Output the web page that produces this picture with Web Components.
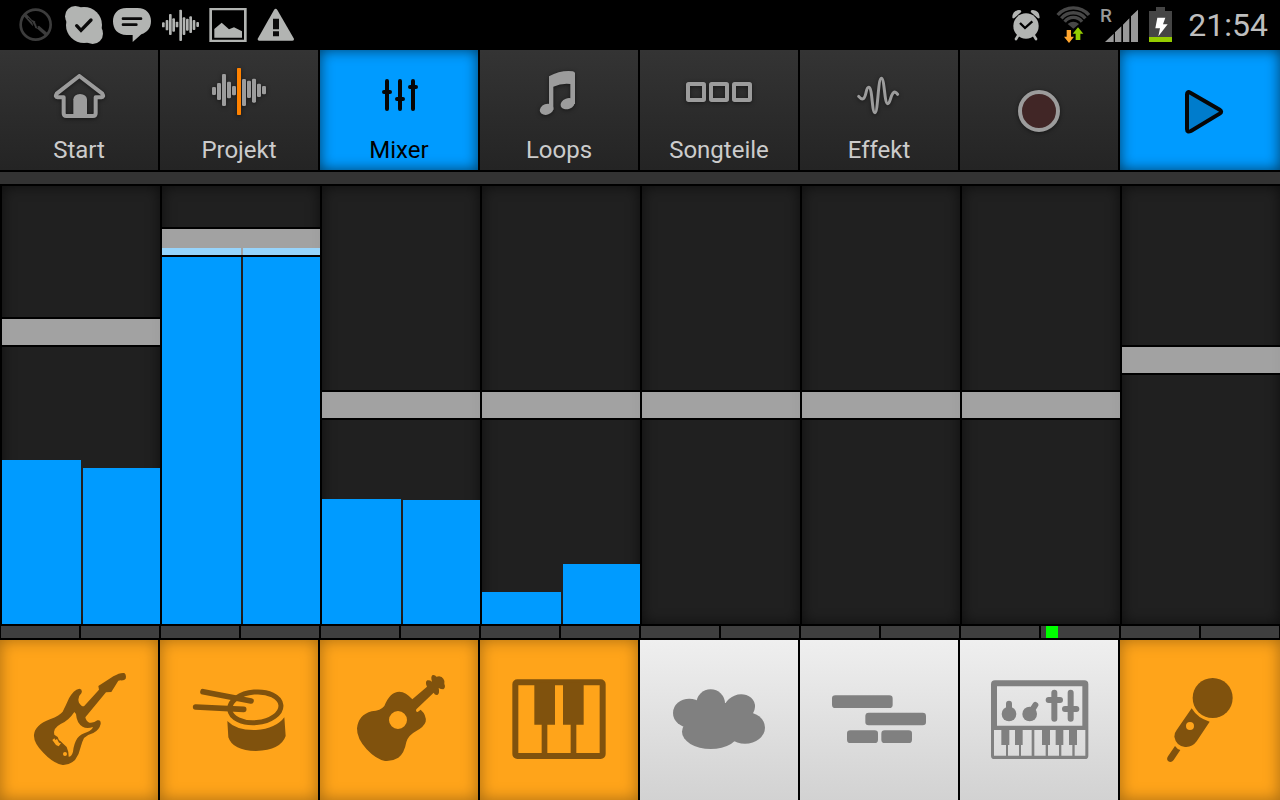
<!DOCTYPE html>
<html lang="de">
<head>
<meta charset="utf-8">
<title>Mixer</title>
<style>
    body{
        margin: 0;
        height: 100vh;
        display: flex;
        flex-direction: column;
        background: #000;
        font-family: Roboto, "Noto Sans", sans-serif;
    }
    .toolbar, .pads{
        display: grid;
        grid-template-columns: repeat(8, 1fr);
    }
    .mixer{
        flex: 1;
        min-height: 0;
        display: grid;
        grid-template-columns: repeat(8, 1fr);
    }
    .divider{
        height: 12px;
        margin: 2px 0;
        background: #333;
    }
</style>
</head>
<body>
<status-bar time="21:54"></status-bar>
<nav class="toolbar">
    <tool-button icon="home">Start</tool-button>
    <tool-button icon="project">Projekt</tool-button>
    <tool-button icon="mixer" active>Mixer</tool-button>
    <tool-button icon="loops">Loops</tool-button>
    <tool-button icon="parts">Songteile</tool-button>
    <tool-button icon="effect">Effekt</tool-button>
    <tool-button icon="record" label="Aufnahme"></tool-button>
    <tool-button icon="play" label="Wiedergabe" active></tool-button>
</nav>
<div class="divider"></div>
<main class="mixer">
    <mixer-channel name="E-Gitarre" volume="679" left="164" right="156"></mixer-channel>
    <mixer-channel name="Schlagzeug" volume="900" left="376" right="376"></mixer-channel>
    <mixer-channel name="Gitarre" volume="500" left="125" right="124"></mixer-channel>
    <mixer-channel name="Piano" volume="500" left="32" right="60"></mixer-channel>
    <mixer-channel name="Atmo" volume="500" left="0" right="0"></mixer-channel>
    <mixer-channel name="Sequenz" volume="500" left="0" right="0"></mixer-channel>
    <mixer-channel name="Synthesizer" volume="500" left="0" right="0"></mixer-channel>
    <mixer-channel name="Mikrofon" volume="610" left="0" right="0"></mixer-channel>
</main>
<song-position value="825"></song-position>
<section class="pads">
    <track-pad icon="strat" label="E-Gitarre" active></track-pad>
    <track-pad icon="drum" label="Schlagzeug" active></track-pad>
    <track-pad icon="acoustic" label="Gitarre" active></track-pad>
    <track-pad icon="piano" label="Piano" active></track-pad>
    <track-pad icon="cloud" label="Atmo"></track-pad>
    <track-pad icon="blocks" label="Sequenz"></track-pad>
    <track-pad icon="synth" label="Synthesizer"></track-pad>
    <track-pad icon="mic" label="Mikrofon" active></track-pad>
</section>

<script>
// vertical bars of a waveform: [x, top, bottom]
const bars = (list, w) => list.map(([x, a, b]) =>
    `<rect x="${x - w / 2}" y="${a}" width="${w}" height="${b - a}" rx="${w / 3}"/>`).join("")

// name: [viewBox, markup]; everything is drawn in currentColor unless it says otherwise
const ICONS = {
    mute: ["48 15 120 120", `
        <circle cx="107" cy="74" r="45" fill="none" stroke="currentColor" stroke-width="8"/>
        <path d="M72 49L79 41L96 60L105 64L112 80L117 77L143 100L136 107L112 86L106 84L101 72L98 78Z"/>
        <path d="M84 54L97 66L103 84M106 66L113 84" fill="none" stroke="#000" stroke-width="2"/>`],
    skype: ["192 15 120 120", `
        <circle cx="252" cy="75" r="54"/><circle cx="226" cy="49" r="31"/><circle cx="278" cy="101" r="31"/>
        <path d="M230 77L243 91L273 60" fill="none" stroke="#0a0a0a" stroke-width="10" stroke-linecap="round"/>`],
    chat: ["336 15 120 120", `
        <path d="M380 24H412C440 24 453 43 453 63C453 85 442 96 424 103L398 126V105H380C352 105 339 87 339 64C339 42 352 24 380 24Z"/>
        <path d="M369 56H423M369 74H409" stroke="#0a0a0a" stroke-width="8" stroke-linecap="round"/>`],
    wave: ["480 15 120 120", bars([[490, 67, 82], [501, 60, 91], [511, 42, 105], [521, 55, 95], [531, 65, 82],
        [542, 29, 123], [552, 52, 105], [562, 56, 92], [572, 49, 99], [582, 60, 90], [593, 66, 81]], 8)],
    picture: ["624 15 120 120", `
        <path d="M628 24H740V126H628ZM636 31V119H732V31Z" fill-rule="evenodd"/>
        <path d="M643 113V87L665 68L687 88L702 82L726 94V113Z"/>`],
    warning: ["768 15 120 120", `
        <path d="M822 30Q827 22 832 30L881 115Q884 122 877 122H778Q771 122 774 115Z"/>
        <path d="M819 56H837V88H819ZM819 94H837V109H819Z" fill="#0c0c0c"/>`],
    alarm: ["132 15 120 120", `
        <path d="M176 104L168 117M220 104L228 117" stroke="currentColor" stroke-width="8" stroke-linecap="round"/>
        <path d="M157 52Q157 32 177 30Q186 30 183 37L163 54Q157 57 157 52ZM239 52Q239 32 219 30Q210 30 213 37L233 54Q239 57 239 52Z"/>
        <circle cx="198" cy="78" r="38"/>
        <path d="M180 69L195 84L217 64" fill="none" stroke="#000" stroke-width="7"/>`],
    wifi: ["276 15 120 120", `
        <g fill="none" stroke="#474747" stroke-width="10">
            <path d="M293 45A62 62 0 0 1 387 45"/><path d="M304 55A47 47 0 0 1 376 55"/><path d="M314 65A33 33 0 0 1 366 65"/>
        </g>
        <path d="M323 72Q340 58 357 72L340 86Z" fill="#474747"/>
        <path d="M320 90H333V110H342L327 129L312 110H320Z" fill="#ffa52e"/>
        <path d="M347 120V101H338L354 82L370 101H361V120Z" fill="#94cc00"/>`],
    signal: ["420 0 120 150", `
        <path d="M435 126L461 101V126ZM465 97L484 79V126H465ZM489 74L508 55V126H489ZM513 49L534 29V126H513Z"/>
        <text x="420" y="65" font-size="57" font-weight="500">R</text>`],
    battery: ["564 15 72 120", `
        <path d="M588 21H615V33H636V111H567V33H588Z" fill="#454545"/>
        <path d="M567 111H636V126H567Z" fill="#94cc00"/>
        <path d="M592 53H616L609 73H623L595 109L600 85H586Z" fill="#fff"/>`],

    home: ["117 168 240 240", `
        <path d="M238 228L170 281Q164 291 173 292H191V340Q191 348 199 348H279Q287 348 287 340V292H304Q313 291 307 281Z" fill="none" stroke="currentColor" stroke-width="12" stroke-linejoin="round"/>
        <path d="M220 348V298Q222 283 240 282Q259 283 261 298V348Z"/>`],
    project: ["597 168 240 240", bars([[642, 261, 285], [657, 249, 300], [672, 222, 318], [687, 245, 295], [702, 258, 286],
        [732, 237, 318], [747, 242, 294], [762, 236, 308], [777, 251, 291], [792, 258, 283]], 12) +
        `<rect x="711" y="204" width="12" height="141" rx="2" fill="#ff8200"/>`],
    mixer: ["117 18 240 240", `
        <path d="M201 93V177M240 93V177M279 93V177M192 126H210M231 147H249M270 111H288" stroke="currentColor" stroke-width="12" stroke-linecap="round"/>`],
    loops: ["597 18 240 240", `
        <path d="M687 79Q722 60 758 64Q765 65 765 70V162H751V102Q725 99 700 110V180H687Z"/>
        <ellipse cx="680" cy="178" rx="21" ry="16" transform="rotate(-20 680 178)"/>
        <ellipse cx="743" cy="161" rx="22" ry="16" transform="rotate(-20 743 161)"/>`],
    parts: ["117 18 240 240", `
        <g fill="none" stroke="currentColor" stroke-width="12">
            <rect x="144" y="102" width="48" height="48" rx="2"/><rect x="213" y="102" width="48" height="48" rx="2"/><rect x="282" y="102" width="48" height="48" rx="2"/>
        </g>`],
    effect: ["597 18 240 240", `
        <path d="M656 139Q664 149 670 146C680 140 677 112 686 112C698 112 695 188 705 188C714 188 714 85 724 85C734 85 733 161 743 161C752 161 752 127 764 126Q769 127 773 133" fill="none" stroke="currentColor" stroke-width="9" stroke-linecap="round"/>`],
    record: ["117 210 240 240", `<circle cx="237" cy="333" r="57" fill="#412626" stroke="currentColor" stroke-width="12"/>`],
    play: ["600 210 240 240", `
        <path d="M681 283Q681 273 691 278L779 329Q788 335 779 341L693 393Q681 398 681 388Z" fill="#007ccc" stroke="currentColor" stroke-width="12"/>`],

    strat: ["57 150 360 360", `
        <path d="M373 189Q380 195 377 206Q373 212 362 211L355 212L334 246L318 247L256 322Q258 334 268 338Q282 340 292 331Q303 328 302 342Q298 360 280 369Q262 374 252 384Q247 394 243 408Q238 432 225 450Q208 466 188 465Q160 460 130 428Q100 398 102 374Q105 345 150 328Q180 316 188 305Q197 288 207 265Q220 240 238 236Q249 238 244 250Q231 262 237 278Q244 290 252 289L297 239L295 228L340 199Q360 187 373 189Z"/>
        <path d="M223 306Q206 332 182 342Q158 355 163 374L173 381L177 391L181 393L200 411Q206 424 206 440Q215 440 219 425Q222 400 232 385Q242 372 262 366Q276 360 279 351Q260 357 248 350Q230 340 228 312ZM157 390L163 385L166 390L171 387L177 398L183 400L176 409L168 405Z" fill="#ffa41a"/>
        <circle cx="195" cy="432" r="6" fill="#ffa41a"/>`],
    drum: ["537 150 360 360", `
        <ellipse cx="766" cy="292" rx="77" ry="46" transform="rotate(-5 766 292)" fill="none" stroke="currentColor" stroke-width="15"/>
        <path d="M609 245L753 273M587 291L731 298" stroke="currentColor" stroke-width="17" stroke-linecap="round"/>
        <path d="M682 333Q710 362 768 360Q828 356 853 322L857 378Q843 420 768 423Q698 422 685 382Z"/>`],
    acoustic: ["57 150 360 360", `
        <path d="M238 245Q258 246 277 268L321 230Q314 216 322 211Q330 210 336 215Q331 200 338 195Q346 194 349 200Q364 195 370 206Q376 214 373 222Q378 232 370 238Q362 238 356 234Q360 250 352 255Q344 256 341 248L289 298Q286 306 293 306L302 299Q320 315 317 335Q312 350 290 362Q264 376 259 396Q253 430 235 443Q215 455 195 453Q168 448 140 418Q110 385 111 355Q115 315 155 304Q182 302 193 288Q210 245 238 245ZM234 303A27 27 0 1 0 234 357A27 27 0 1 0 234 303Z" fill-rule="evenodd"/>`],
    piano: ["537 150 360 360", `
        <rect x="586" y="217" width="262" height="221" rx="6" fill="none" stroke="currentColor" stroke-width="18"/>
        <path d="M643 217H705V344H682V438H665V344H643ZM729 217H791V344H769V438H752V344H729Z"/>`],
    cloud: ["57 150 360 360", `
        <ellipse cx="148" cy="309" rx="49" ry="43"/><ellipse cx="212" cy="281" rx="43" ry="43"/>
        <ellipse cx="298" cy="294" rx="48" ry="40" transform="rotate(-22 298 294)"/>
        <ellipse cx="315" cy="353" rx="60" ry="48"/><ellipse cx="212" cy="365" rx="86" ry="52"/>
        <ellipse cx="235" cy="325" rx="75" ry="48"/>`],
    blocks: ["537 150 360 360", `
        <rect x="576" y="256" width="182" height="38" rx="10"/><rect x="676" y="308" width="182" height="38" rx="10"/>
        <rect x="621" y="361" width="93" height="38" rx="10"/><rect x="724" y="361" width="92" height="38" rx="10"/>`],
    synth: ["57 150 360 360", `
        <path d="M105 211H373Q385 211 385 223V437Q385 447 375 447H103Q93 447 93 437V223Q93 211 105 211ZM111 229V347H367V229ZM102 360V437H138V360ZM144 360V437H177V360ZM183 360V437H215V360ZM223 360V437H257V360ZM264 360V437H297V360ZM304 360V437H337V360ZM344 360V437H376V360Z" fill-rule="evenodd"/>
        <path d="M124 350H148V405H124ZM165 350H188V405H165ZM246 350H270V405H246ZM287 350H310V405H287ZM327 350H351V405H327Z"/>
        <circle cx="147" cy="312" r="22"/><circle cx="209" cy="312" r="22"/>
        <path d="M147 281V300M226 285L212 307M283 248V326M266 270H300M332 248V326M315 297H349" stroke="currentColor" stroke-width="18" stroke-linecap="round"/>`],
    mic: ["540 150 360 360", `
        <circle cx="758" cy="264" r="60"/>
        <path d="M695 295Q713 325 749 335L710 394Q696 413 675 411Q648 407 643 380Q642 370 650 360ZM690 336A12 12 0 1 0 690 360A12 12 0 1 0 690 336Z" fill-rule="evenodd"/>
        <path d="M645 408Q651 417 661 420L641 450Q634 459 625 454Q618 448 624 439Z"/>`]
}

class UiIcon extends HTMLElement{
    constructor(){
        super()
        this.attachShadow({mode:"open"})
    }
    connectedCallback(){
        const [box, shape] = ICONS[this.getAttribute("name")]
        this.shadowRoot.innerHTML = `
        <style>
            :host{
                display: block;
                width: 40px;
                height: 40px;
            }
            svg{
                display: block;
                width: 100%;
                height: 100%;
                overflow: visible;
                fill: currentColor;
            }
        </style>
        <svg viewBox="${box}" aria-hidden="true">${shape}</svg>
        `
    }
}

class StatusBar extends HTMLElement{
    constructor(){
        super()
        this.attachShadow({mode:"open"})
    }
    connectedCallback(){
        this.shadowRoot.innerHTML = `
        <style>
            :host{
                display: flex;
                align-items: center;
                justify-content: space-between;
                height: 50px;
                padding: 0 12px 0 16px;
                color: #b2b4b2;
            }
            div{
                display: flex;
                align-items: center;
                gap: 8px;
            }
            .off{ color: #3c3c3c; }
            .signal{
                height: 50px;
                color: #999;
            }
            .battery{ width: 24px; }
            time{
                margin-left: 8px;
                color: #bebebe;
                font-size: 32px;
                line-height: 40px;
            }
        </style>
        <div>
            <ui-icon name="mute" class="off"></ui-icon>
            <ui-icon name="skype"></ui-icon>
            <ui-icon name="chat"></ui-icon>
            <ui-icon name="wave"></ui-icon>
            <ui-icon name="picture"></ui-icon>
            <ui-icon name="warning"></ui-icon>
        </div>
        <div>
            <ui-icon name="alarm"></ui-icon>
            <ui-icon name="wifi"></ui-icon>
            <ui-icon name="signal" class="signal"></ui-icon>
            <ui-icon name="battery" class="battery"></ui-icon>
            <time>${this.getAttribute("time")}</time>
        </div>
        `
    }
}

class ToolButton extends HTMLElement{
    constructor(){
        super()
        this.attachShadow({mode:"open"})
    }
    connectedCallback(){
        const label = this.getAttribute("label")
        this.shadowRoot.innerHTML = `
        <style>
            :host{
                display: block;
                height: 120px;
                border-right: 2px solid #000;
            }
            :host(:last-child){ border-right: 0; }
            button{
                display: flex;
                flex-direction: column;
                align-items: center;
                justify-content: flex-end;
                width: 100%;
                height: 100%;
                border: 0;
                padding: 0 0 6px;
                font: inherit;
                font-size: 24px;
                line-height: 28px;
                color: #ccc;
                background: linear-gradient(#343434, #242424);
            }
            button.bare{
                justify-content: center;
                padding: 0;
            }
            ui-icon{
                width: 80px;
                height: 80px;
                color: #9c9c9c;
                filter: drop-shadow(0 1px 2px rgba(0,0,0,.5));
            }
            :host([active]) button{
                color: #000;
                background: #009bff;
                box-shadow: inset 0 0 14px rgba(0,0,0,.6);
            }
            :host([active]) ui-icon{
                color: #060606;
                filter: none;
            }
        </style>
        <button type="button" ${label ? `class="bare" aria-label="${label}"` : ""}>
            <ui-icon name="${this.getAttribute("icon")}"></ui-icon>
            ${label ? "" : "<span><slot></slot></span>"}
        </button>
        `
    }
}

class MixerChannel extends HTMLElement{
    constructor(){
        super()
        this.attachShadow({mode:"open"})
    }
    // meter levels come in steps of 1/438 of full scale
    level(side){
        return this.getAttribute(side) / 438 * 100
    }
    connectedCallback(){
        this.shadowRoot.innerHTML = `
        <style>
            :host{
                display: grid;
                grid-template: 100% / 100%;
                container-type: size;
                min-width: 0;
                border-left: 2px solid #000;
                background: #202020;
                box-shadow: inset 0 0 14px rgba(0,0,0,.6);
            }
            .meter, input{
                grid-area: 1 / 1;
            }
            .meter{
                display: grid;
                grid-template-columns: 50% 1fr;
                column-gap: 2px;
                align-items: end;
            }
            .meter i{ background: #009bff; }
            input{
                appearance: none;
                writing-mode: vertical-lr;
                direction: rtl;
                width: 100%;
                height: 100%;
                margin: 0;
                background: none;
            }
            /* the track is only as wide as the thumb, so measure against the channel */
            input::-webkit-slider-thumb{
                appearance: none;
                box-sizing: border-box;
                width: 100cqw;
                height: 30px;
                border: solid #000;
                border-width: 2px 0;
                background: rgba(250,250,250,.6);
                background-clip: padding-box;
            }
        </style>
        <div class="meter">
            <i style="height: ${this.level("left")}%"></i>
            <i style="height: ${this.level("right")}%"></i>
        </div>
        <input type="range" min="0" max="1000" value="${this.getAttribute("volume")}" aria-label="${this.getAttribute("name")}">
        `
    }
}

class SongPosition extends HTMLElement{
    constructor(){
        super()
        this.attachShadow({mode:"open"})
    }
    connectedCallback(){
        this.shadowRoot.innerHTML = `
        <style>
            :host{
                display: block;
                padding: 2px 0;
            }
            input{
                appearance: none;
                display: block;
                width: 100%;
                height: 12px;
                margin: 0;
                /* sixteen steps, two for each channel */
                background: linear-gradient(90deg, #000 1px, #3f3f3f 1px calc(100% - 1px), #000 calc(100% - 1px)) 0 0 / 6.25% 100%;
            }
            input::-webkit-slider-thumb{
                appearance: none;
                width: 12px;
                height: 12px;
                background: #0f0;
            }
        </style>
        <input type="range" min="0" max="1000" value="${this.getAttribute("value")}" aria-label="Position">
        `
    }
}

class TrackPad extends HTMLElement{
    constructor(){
        super()
        this.attachShadow({mode:"open"})
    }
    connectedCallback(){
        this.shadowRoot.innerHTML = `
        <style>
            :host{
                display: block;
                height: 160px;
                border-right: 2px solid #000;
            }
            :host(:last-child){ border-right: 0; }
            button{
                display: grid;
                place-items: center;
                width: 100%;
                height: 100%;
                border: 0;
                padding: 0;
                color: #808080;
                background: linear-gradient(#efefef, #d2d2d2);
            }
            :host([active]) button{
                color: #80520d;
                background: #ffa41a;
                box-shadow: inset 0 0 16px rgba(0,0,0,.35);
            }
            ui-icon{
                width: 120px;
                height: 120px;
            }
        </style>
        <button type="button" aria-label="${this.getAttribute("label")}">
            <ui-icon name="${this.getAttribute("icon")}"></ui-icon>
        </button>
        `
    }
}

customElements.define("ui-icon", UiIcon)
customElements.define("status-bar", StatusBar)
customElements.define("tool-button", ToolButton)
customElements.define("mixer-channel", MixerChannel)
customElements.define("song-position", SongPosition)
customElements.define("track-pad", TrackPad)
</script>
</body>
</html>
